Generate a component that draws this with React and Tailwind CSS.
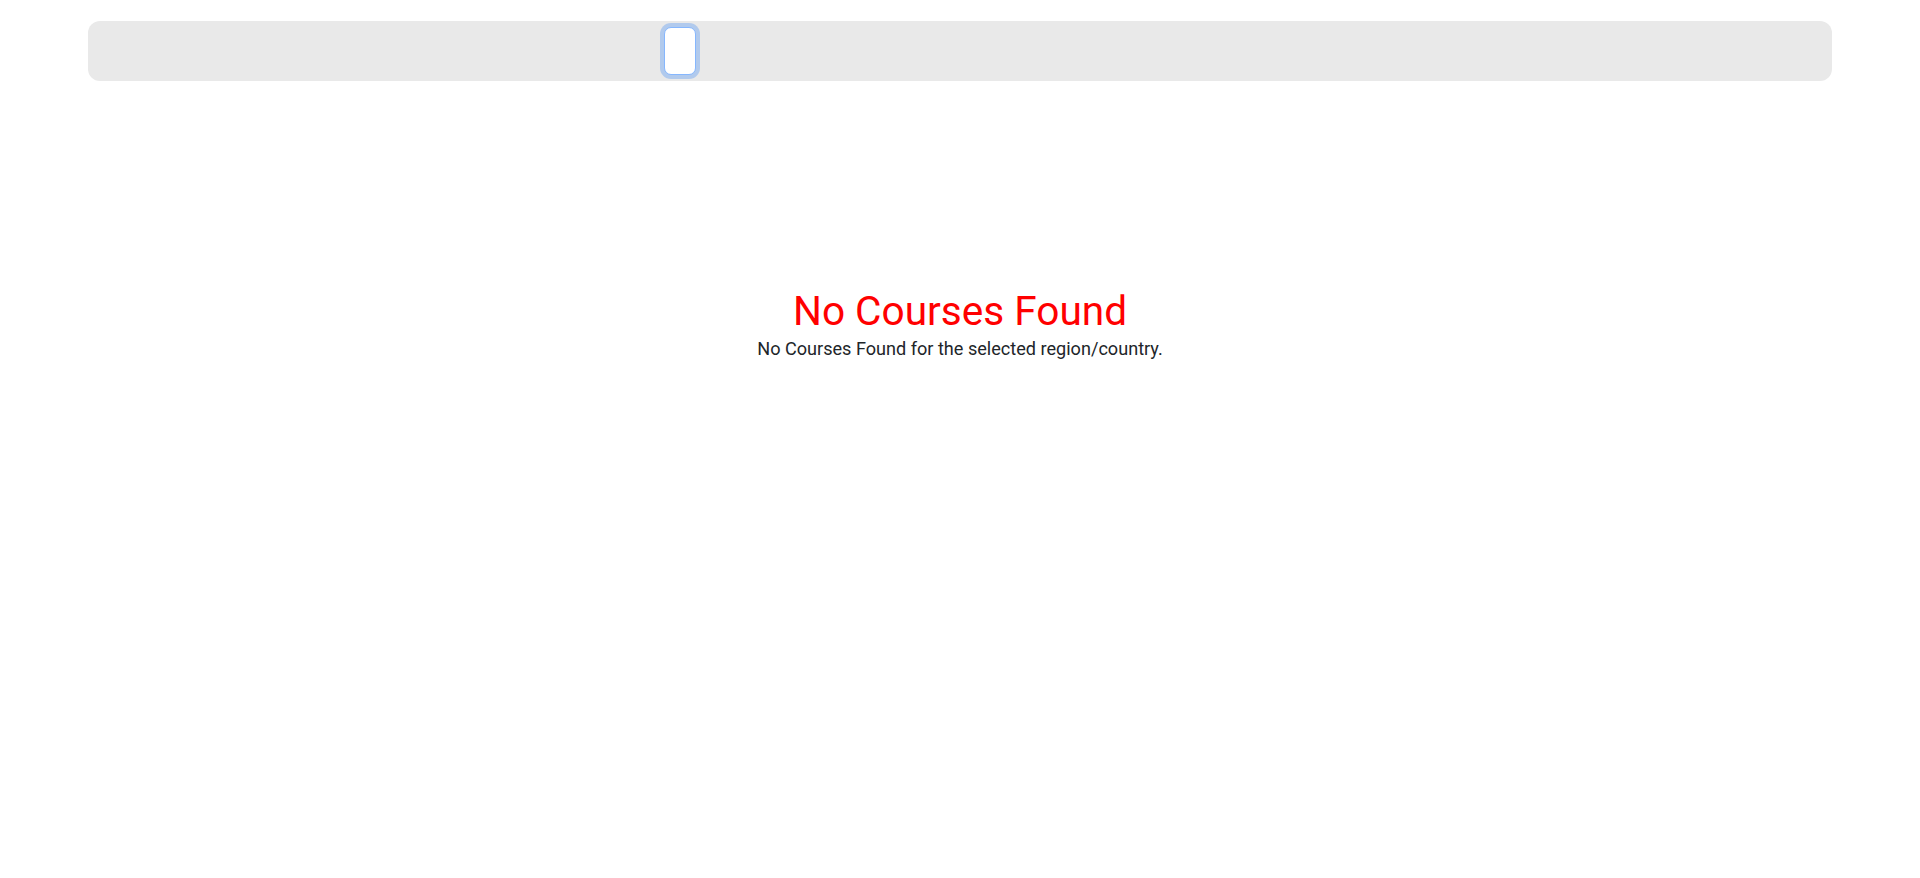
export default function App() {
  return (
    <div className="min-h-[878px] bg-white font-['Roboto',sans-serif]">
      <div className="pt-[21px] px-[88px]">
        {/* filter bar */}
        <div className="h-[60px] rounded-xl bg-[#e9e9e9] flex items-center pl-[576px]">
          <button className="w-[32px] h-[48px] rounded-[7px] bg-white border border-[#86b7fe] shadow-[0_0_0_4px_rgba(13,110,253,0.25)]" />
        </div>
      </div>

      <div className="mt-[206px] text-center">
        <h1 className="text-[40.6px] leading-[48px] font-normal text-[#ff0000]">No Courses Found</h1>
        <p className="text-[18.1px] leading-[27px] text-[#212529]">No Courses Found for the selected region/country.</p>
      </div>
    </div>
  );
}
